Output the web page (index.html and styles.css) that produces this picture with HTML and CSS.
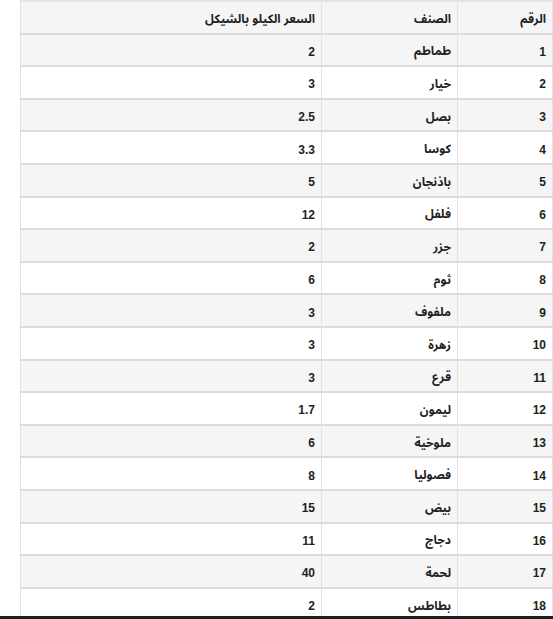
FILE: index.html
```html
<!DOCTYPE html>
<html lang="ar" dir="rtl">
<head>
<meta charset="utf-8">
<link rel="stylesheet" href="styles.css">
</head>
<body>
<table class="prices">
<thead>
<tr><th class="c-num">الرقم</th><th class="c-item">الصنف</th><th class="c-price">السعر الكيلو بالشيكل</th></tr>
</thead>
<tbody>
<tr><td>1</td><td>طماطم</td><td>2</td></tr>
<tr><td>2</td><td>خيار</td><td>3</td></tr>
<tr><td>3</td><td>بصل</td><td>2.5</td></tr>
<tr><td>4</td><td>كوسا</td><td>3.3</td></tr>
<tr><td>5</td><td>باذنجان</td><td>5</td></tr>
<tr><td>6</td><td>فلفل</td><td>12</td></tr>
<tr><td>7</td><td>جزر</td><td>2</td></tr>
<tr><td>8</td><td>ثوم</td><td>6</td></tr>
<tr><td>9</td><td>ملفوف</td><td>3</td></tr>
<tr><td>10</td><td>زهرة</td><td>3</td></tr>
<tr><td>11</td><td>قرع</td><td>3</td></tr>
<tr><td>12</td><td>ليمون</td><td>1.7</td></tr>
<tr><td>13</td><td>ملوخية</td><td>6</td></tr>
<tr><td>14</td><td>فصوليا</td><td>8</td></tr>
<tr><td>15</td><td>بيض</td><td>15</td></tr>
<tr><td>16</td><td>دجاج</td><td>11</td></tr>
<tr><td>17</td><td>لحمة</td><td>40</td></tr>
<tr><td>18</td><td>بطاطس</td><td>2</td></tr>
</tbody>
</table>
<div class="frame-bottom"></div>
</body>
</html>
```
FILE: styles.css
```css
html, body {
  margin: 0;
  padding: 0;
  background: #ffffff;
}
body {
  font-family: "Liberation Sans", "Noto Sans Arabic", "Noto Kufi Arabic", "Noto Naskh Arabic", "DejaVu Sans", sans-serif;
  font-size: 12px;
  font-weight: bold;
  color: #222;
  padding-top: 0;
}
.prices {
  border-collapse: collapse;
  width: 533px;
  margin-right: 0;
  margin-left: auto;
  table-layout: fixed;
}
.prices th, .prices td {
  text-align: right;
  padding: 4px 6px 0 6px;
  height: 30.6px;
  box-sizing: border-box;
  border-top: 2px solid #dcdcdc;
  border-left: 1px solid #e2e2e2;
  border-right: 1px solid #e2e2e2;
  font-weight: bold;
  vertical-align: middle;
}
.prices tr {
  height: 32.6px;
}
.prices thead th {
  border-top: 2px solid #e4e4e4;
  background: #f5f5f5;
}
.prices tbody tr:nth-child(odd) td {
  background: #f5f5f5;
}
.c-num { width: 95px; }
.c-item { width: 136px; }
.frame-bottom {
  position: fixed;
  left: 0;
  right: 0;
  bottom: 0;
  height: 3px;
  background: #1e1e1e;
}
```
